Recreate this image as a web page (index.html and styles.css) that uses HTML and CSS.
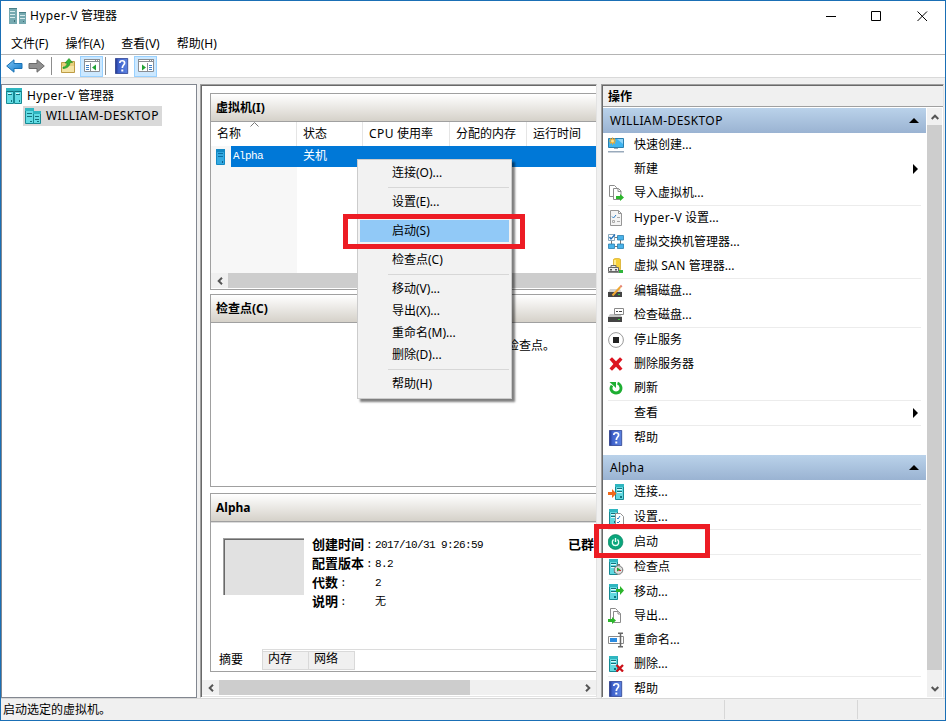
FILE: index.html
```html
<!DOCTYPE html>
<html lang="zh-CN">
<head>
  <meta charset="UTF-8" />
  <meta name="viewport" content="width=device-width, initial-scale=1" />
  <title>Hyper-V 管理器</title>
  <link rel="stylesheet" href="styles.css">
</head>
<body>
  <svg class="sprite" aria-hidden="true">
    <defs>
      <linearGradient id="gBlue" x1="0" y1="0" x2="1" y2="1"><stop offset="0" stop-color="#7fc4f5"/><stop offset="1" stop-color="#0f78c8"/></linearGradient>
      <linearGradient id="gHelp" x1="0" y1="0" x2="1" y2="0"><stop offset="0" stop-color="#22378c"/><stop offset=".25" stop-color="#3f62cc"/><stop offset="1" stop-color="#5b82e0"/></linearGradient>
    </defs>
    <symbol id="server" viewBox="0 0 16 16">
      <path fill="#62d8e0" stroke="#178a94" d="M1.5.5h8v15h-8z"/>
      <path fill="#2fb6c0" d="M1 0h9v3H1z"/>
      <path fill="none" stroke="#12727c" d="M3 4.500h5M3 7.500h5"/>
      <path fill="#d9fbfd" d="M3 5h5v1H3zM3 8h5v1H3z"/>
      <path fill="#12727c" d="M6 12h2v2H6z"/>
    </symbol>
    <symbol id="servers" viewBox="0 0 16 16">
      <path fill="#62dce4" stroke="#178a94" d="M.5.5h7v15h-7zM8.500.5h7v15h-7z"/>
      <path fill="#2fb6c0" d="M0 0h16v3H0z"/>
      <path fill="none" stroke="#12727c" d="M1 3.500h6M9 3.500h6M2 6.500h4M10 6.500h4"/>
      <path fill="#d9fbfd" d="M2 5h3v1H2zM10 5h3v1h-3z"/>
      <path fill="#12727c" d="M5 12h1v2H5zM13 12h1v2h-1z"/>
    </symbol>
    <symbol id="host" viewBox="0 0 16 16">
      <path fill="#62dce4" stroke="#178a94" d="M.5.5h8v15h-8zM8.500 4.500h7v11h-7z"/>
      <path fill="#2fb6c0" d="M0 0h9v3H0zM8 3h8v3H8z"/>
      <path fill="none" stroke="#12727c" d="M2 5.500h5M2 8.500h5M10 8.500h4M10 11.500h4"/>
      <path fill="#12727c" d="M5 13h2v1H5zM12 13h2v1h-2z"/>
    </symbol>
    <symbol id="app" viewBox="0 0 17 16">
      <path fill="#75a9b0" d="M0 0h8v16H0zM10 4h7v12h-7z"/>
      <path fill="#4a8088" d="M0 0h8v1H0zM10 4h7v1h-7z"/>
      <path stroke="#d5eaec" d="M1 3.500h5M1 6.500h5M1 9.500h5M11 7.500h5M11 10.500h5"/>
      <path fill="#3c6f77" d="M5 12h1v2H5zM14 13h1v1h-1z"/>
    </symbol>
    <symbol id="vm" viewBox="0 0 9 16">
      <path fill="#34a9e0" stroke="#1389c4" d="M.5.5h8v15h-8z"/>
      <path fill="#1389c4" d="M0 0h9v3H0z"/>
      <path stroke="#0c6ea3" d="M2 4.500h5M2 7.500h5"/>
      <path fill="#0c5d8a" d="M6 12h1v2H6z"/>
    </symbol>
    <symbol id="back" viewBox="0 0 17 14">
      <path fill="url(#gBlue)" stroke="#1a72b5" d="M.7 7 8 .8v3.700h8v5H8v3.700z"/>
    </symbol>
    <symbol id="forward" viewBox="0 0 17 14">
      <path fill="#919191" stroke="#6b6b6b" d="M16.300 7 9 .8v3.700H1v5h8v3.700z"/>
    </symbol>
    <symbol id="folder" viewBox="0 0 16 16">
      <path fill="#e8cf7c" stroke="#bd9b45" d="M1.500 4.500h6l1-1h6v11h-13z"/>
      <path fill="#f4e3a4" d="M2 8h12v6H2z"/>
      <path fill="#35b534" stroke="#1f8a22" stroke-width=".6" d="M3 9c3 0 4-2 4-4H5l4-4.500L12.500 4.500H10C10 8 7 10.500 3 10.500z"/>
    </symbol>
    <symbol id="paneLeft" viewBox="0 0 16 14">
      <path fill="#fff" stroke="#8a8e94" d="M.5.5h15v12h-15z"/>
      <path fill="#8a8e94" d="M0 0h16v4H0z"/><path stroke="#fff" d="M1 1.500h10M12 1.500h1M14 1.500h1M1 3.500h14"/>
      <path stroke="#8a8e94" d="M6.500 4v9"/><path stroke="#3e7fc6" d="M2 6.500h3M2 8.500h3M2 10.500h3"/>
      <path fill="#21a334" d="M12 5.500v6L8 8.500z"/>
    </symbol>
    <symbol id="paneRight" viewBox="0 0 16 14">
      <path fill="#fff" stroke="#8a8e94" d="M.5.5h15v12h-15z"/>
      <path fill="#8a8e94" d="M0 0h16v4H0z"/><path stroke="#fff" d="M1 1.500h10M12 1.500h1M14 1.500h1M1 3.500h14"/>
      <path stroke="#8a8e94" d="M9.500 4v9"/><path stroke="#3e7fc6" d="M11 6.500h3M11 8.500h3M11 10.500h3"/>
      <path fill="#21a334" d="M4 5.500v6l4-3z"/>
    </symbol>
    <symbol id="help" viewBox="0 0 16 16">
      <path fill="url(#gHelp)" stroke="#2a3c8c" stroke-width=".8" d="M1.500.4h12.200v15.200H1.500z"/>
      <path fill="none" stroke="#fff" stroke-width="1.700" d="M5.800 5c0-3 4.800-3 4.800 0 0 2-2.300 2.200-2.300 5"/>
      <path fill="#fff" d="M7.300 11.500h2v2h-2z"/>
    </symbol>
    <symbol id="quick" viewBox="0 0 16 16">
      <path fill="#3fb4f0" stroke="#2a7fae" d="M.5 1.500h15v9H.5z"/>
      <path fill="#8fd4f8" d="M9 2h6v5z"/>
      <path fill="#9ab" d="M6 11h4v1H6zM0 14h16v1.500H0z"/>
      <path stroke="#f5a623" stroke-width="1.100" d="M4.500.5v7M1 4h7M2 1.500l5 5M7 1.500l-5 5"/>
      <circle cx="4.500" cy="4" r="1.500" fill="#ffe08a"/>
    </symbol>
    <symbol id="import" viewBox="0 0 16 16">
      <path fill="#fff" stroke="#8b8b8b" d="M1.500.5h5l2 2v9h-7z"/>
      <path fill="#fff" stroke="#8b8b8b" d="M5.500 3.500h5l2.500 2.500v8.500H5.500zM10 3.500V6.500h3"/>
      <path fill="#2cb52c" d="M8 11h4V9l4 3.500-4 3.500v-2H8z"/>
    </symbol>
    <symbol id="export" viewBox="0 0 16 16">
      <path fill="#fff" stroke="#8b8b8b" d="M2.500.5h5l2 2v9h-7z"/>
      <path fill="#fff" stroke="#8b8b8b" d="M5.500 3.500h5l2 2v9h-7zM10 3.500V6h2.500"/>
      <path fill="#2cb52c" d="M0 11h4V9l4 3.500L4 16v-2H0z"/>
    </symbol>
    <symbol id="settings" viewBox="0 0 16 16">
      <path fill="#f4f4f4" stroke="#969696" d="M2.500.5h8l3 3v12h-11zM10.500.5v3h3"/>
      <path fill="none" stroke="#2b7cc4" d="M4 6.500 5.500 8 8 5"/>
      <path fill="none" stroke="#aaa" d="M9 7.500h3M4.500 10.500h2v2h-2zM9 11.500h3"/>
    </symbol>
    <symbol id="switch" viewBox="0 0 16 16">
      <path stroke="#777" d="M7 3.500h3M7 12.500h3M3.500 7v3M12.500 6v4" fill="none"/>
      <path fill="#fff" stroke="#8aa9bd" d="M.5.5h6v6h-6z"/>
      <path fill="#49b3ea" stroke="#2b7faf" stroke-width=".8" d="M9.500 1.500h6v4.500h-6zM.5 10h6v4.500h-6zM9.500 10h6v4.500h-6z"/>
      <path fill="none" stroke="#2471b8" stroke-width="1.300" d="M1.500 3 3 5l4-4.500"/>
    </symbol>
    <symbol id="san" viewBox="0 0 16 16">
      <path fill="#f7d038" stroke="#d1a51c" stroke-width=".7" d="M5.500 1.500c0-1.500 7-1.500 7 0v10h-7z"/>
      <path fill="#ffeb8f" d="M6 2h2v9H6z"/>
      <path fill="#ededed" stroke="#666" d="M.5 9.500h10v4H.5zM3 9V7.500h5V9"/>
      <path fill="#555" d="M2 11h2v1.500H2zM7 11h2v1.500H7z"/>
      <path fill="#888" d="M0 14h11v1H0z"/><path fill="#2fb53b" d="M11 12h4v3h-4z"/>
    </symbol>
    <symbol id="editDisk" viewBox="0 0 16 16">
      <path fill="#d2d2d2" d="M2 6h10l2 4H0z"/><path fill="#444" d="M0 9h14v5H0z"/>
      <path fill="#37c637" d="M10 11h2v1h-2z"/>
      <path stroke="#f0a830" stroke-width="2" d="M4.500 12.500 12.300 4"/>
      <path stroke="#e4806f" stroke-width="2" d="M12.300 4 13.700 2.500"/>
    </symbol>
    <symbol id="checkDisk" viewBox="0 0 16 16">
      <path fill="#c4c4c4" d="M2 7h10l2 3H0z"/><path fill="#444" d="M0 10h14v5H0z"/>
      <path fill="#37c637" d="M10 12h2v1h-2z"/>
      <path fill="#fff" stroke="#8a8a8a" d="M6.500 1.500h9v6h-9z"/>
      <path stroke="#444" d="M8 4.500h2M11 4.500h3"/>
    </symbol>
    <symbol id="stop" viewBox="0 0 16 16">
      <circle cx="8" cy="8" r="7.400" fill="#fff" stroke="#9a9a9a"/>
      <path fill="#222" d="M5 5h6v6H5z"/>
    </symbol>
    <symbol id="remove" viewBox="0 0 16 16">
      <path fill="#dc1420" d="M1.500 3.500 4 1.200l4 4 4-4 2.500 2.200L10.600 8l3.900 4.800-2.600 2L8 10.700l-4 4-2.500-2.200L5.400 8z"/>
    </symbol>
    <symbol id="refresh" viewBox="0 0 16 16">
      <path fill="none" stroke="#1eae32" stroke-width="2.800" d="M4 5.500C1.500 9 4 13 8 13s6.500-4 4-8c-.6-.9-1.500-1.500-2.500-1.800"/>
      <path fill="#1eae32" d="M1.500 2h6.500v6z"/>
    </symbol>
    <symbol id="connect" viewBox="0 0 16 16">
      <g transform="translate(6)"><use href="#server" width="16" height="16"/></g>
      <path fill="#f26a1b" d="M0 8h4V5l4.500 4.500L4 14v-3H0z"/>
    </symbol>
    <symbol id="vmSettings" viewBox="0 0 16 16">
      <use href="#server" width="16" height="16"/>
      <path fill="#fff" stroke="#929292" d="M7.500 4.500h5l3 3v8h-8z"/>
      <path fill="none" stroke="#2b7cc4" d="m9 9 1 1 2-3M9 13l1 1 2-2"/>
    </symbol>
    <symbol id="power" viewBox="0 0 16 16">
      <circle cx="7.500" cy="8" r="7.400" fill="#09a67c" stroke="#078260" stroke-width=".7"/>
      <path fill="none" stroke="#e9fff7" stroke-width="1.400" d="M5.500 5.500C3 8 4.500 11.500 7.500 11.500s4.500-3.500 2-6M7.500 4v4"/>
    </symbol>
    <symbol id="checkpoint" viewBox="0 0 16 16">
      <use href="#server" width="16" height="16"/>
      <circle cx="10.500" cy="11" r="4.300" fill="#ddd" stroke="#777"/>
      <path fill="#777" d="M9 5h3v1.500H9z"/><path fill="#22a52c" d="M9 8.500v4l3.500-2z"/><path stroke="#c33" d="M10.500 11.500h2.500"/>
    </symbol>
    <symbol id="move" viewBox="0 0 16 16">
      <use href="#server" width="16" height="16"/>
      <path fill="#2cb52c" d="M8 5h4V2l4 4.500-4 4.500V8H8z"/>
    </symbol>
    <symbol id="rename" viewBox="0 0 16 16">
      <path fill="#fff" stroke="#8a8a8a" d="M.5 4.500h15v7H.5z"/><path fill="#2a8be0" d="M2 6h7v4H2z"/>
      <path fill="none" stroke="#666" stroke-width="1.500" d="M10 1.200h5M10 14.800h5M12.500 1v14"/>
    </symbol>
    <symbol id="delete" viewBox="0 0 16 16">
      <use href="#server" width="16" height="16"/>
      <path stroke="#cc1018" stroke-width="2.300" d="m8.500 9 6.500 6.500M15 9l-6.500 6.500"/>
    </symbol>
    <symbol id="chevron" viewBox="0 0 8 8">
      <path fill="none" stroke="#555" stroke-width="2" d="M.7 6 4 2.700 7.300 6"/>
    </symbol>
  </svg>

  <div class="window">
    <header class="titlebar">
      <svg class="app-icon"><use href="#app"/></svg>
      <span class="title"><span class="latin">Hyper-V</span> 管理器</span>
      <div class="caption-buttons">
        <svg viewBox="0 0 11 11"><path d="M1 5.500h10"/></svg>
        <svg viewBox="0 0 11 11"><path d="M.5.5h9v9h-9z"/></svg>
        <svg viewBox="0 0 11 11"><path d="m.5.500 9.500 9.500M10 .5.5 10"/></svg>
      </div>
    </header>
    <nav class="menubar">
      <span>文件(F)</span><span>操作(A)</span><span>查看(V)</span><span>帮助(H)</span>
    </nav>
    <div class="toolbar">
      <svg class="arrow"><use href="#back"/></svg>
      <svg class="arrow"><use href="#forward"/></svg>
      <i class="bar"></i>
      <svg class="icon"><use href="#folder"/></svg>
      <span class="toggle"><svg class="pane-icon"><use href="#paneLeft"/></svg></span>
      <i class="bar second"></i>
      <svg class="icon"><use href="#help"/></svg>
      <span class="toggle"><svg class="pane-icon"><use href="#paneRight"/></svg></span>
    </div>

    <main>
      <section class="tree">
        <div class="node"><svg class="icon"><use href="#servers"/></svg><span class="label"><span class="latin">Hyper-V</span> 管理器</span></div>
        <div class="node child"><svg class="icon"><use href="#host"/></svg><span class="label latin">WILLIAM-DESKTOP</span></div>
      </section>

      <section class="center">
        <div class="panels">
          <div class="panel vms">
            <h2>虚拟机(I)</h2>
            <div class="columns">
              <span class="c-name">名称<svg class="sort" viewBox="0 0 9 5"><path d="M.5 4.500 4.500.5l4 4"/></svg></span><span class="c-state">状态</span><span class="c-cpu"><b class="latin">CPU</b> 使用率</span><span class="c-mem">分配的内存</span><span class="c-time">运行时间</span>
            </div>
            <div class="list">
              <div class="vm-row">
                <svg class="vm-icon"><use href="#vm"/></svg>
                <div class="selected"><span class="vm-name">Alpha</span><span class="vm-state">关机</span></div>
              </div>
            </div>
            <div class="hscroll">
              <span class="btn"><svg class="chev left"><use href="#chevron"/></svg></span>
              <span class="thumb"></span>
            </div>
          </div>

          <div class="panel checkpoints">
            <h2>检查点(C)</h2>
            <p>此虚拟机没有检查点。</p>
          </div>

          <div class="panel details">
            <h2>Alpha</h2>
            <div class="summary">
              <div class="preview"></div>
              <dl>
                <dt><b>创建时间</b>:</dt><dd>2017/10/31 9:26:59</dd>
                <dt><b>配置版本</b>:</dt><dd>8.2</dd>
                <dt><b>代数</b>:</dt><dd>2</dd>
                <dt><b>说明</b>:</dt><dd>无</dd>
              </dl>
              <b class="cluster">已群</b>
            </div>
            <div class="tabs"><span class="active">摘要</span><span>内存</span><span>网络</span></div>
          </div>
        </div>
        <div class="hscroll">
          <span class="btn"><svg class="chev left"><use href="#chevron"/></svg></span>
          <span class="thumb"></span>
          <span class="btn end"><svg class="chev right"><use href="#chevron"/></svg></span>
        </div>
      </section>

      <section class="actions">
        <h2>操作</h2>
        <div class="actions-body">
          <div class="action-list">
            <h3><span class="latin">WILLIAM-DESKTOP</span><i class="up"></i></h3>
            <ul>
              <li><svg class="icon"><use href="#quick"/></svg>快速创建...</li>
              <li><i class="icon"></i>新建<i class="more"></i></li>
              <li><svg class="icon"><use href="#import"/></svg>导入虚拟机...</li>
              <li class="line"><svg class="icon"><use href="#settings"/></svg><span class="latin">Hyper-V</span> 设置...</li>
              <li><svg class="icon"><use href="#switch"/></svg>虚拟交换机管理器...</li>
              <li><svg class="icon"><use href="#san"/></svg>虚拟 <span class="latin">SAN</span> 管理器...</li>
              <li class="line"><svg class="icon"><use href="#editDisk"/></svg>编辑磁盘...</li>
              <li><svg class="icon"><use href="#checkDisk"/></svg>检查磁盘...</li>
              <li class="line"><svg class="icon"><use href="#stop"/></svg>停止服务</li>
              <li><svg class="icon"><use href="#remove"/></svg>删除服务器</li>
              <li><svg class="icon"><use href="#refresh"/></svg>刷新</li>
              <li class="line"><i class="icon"></i>查看<i class="more"></i></li>
              <li class="line"><svg class="icon"><use href="#help"/></svg>帮助</li>
            </ul>
            <h3><span class="latin">Alpha</span><i class="up"></i></h3>
            <ul>
              <li><svg class="icon"><use href="#connect"/></svg>连接...</li>
              <li class="line"><svg class="icon"><use href="#vmSettings"/></svg>设置...</li>
              <li class="line"><svg class="icon"><use href="#power"/></svg>启动</li>
              <li class="line"><svg class="icon"><use href="#checkpoint"/></svg>检查点</li>
              <li class="line"><svg class="icon"><use href="#move"/></svg>移动...</li>
              <li><svg class="icon"><use href="#export"/></svg>导出...</li>
              <li><svg class="icon"><use href="#rename"/></svg>重命名...</li>
              <li><svg class="icon"><use href="#delete"/></svg>删除...</li>
              <li class="line"><svg class="icon"><use href="#help"/></svg>帮助</li>
            </ul>
          </div>
          <div class="vscroll">
            <span class="btn"><svg class="chev"><use href="#chevron"/></svg></span>
            <span class="thumb"></span>
            <span class="btn bottom"><svg class="chev down"><use href="#chevron"/></svg></span>
          </div>
        </div>
      </section>
    </main>

    <footer class="statusbar"><span class="status-text">启动选定的虚拟机。</span><span class="cell"></span><span class="cell"></span></footer>

    <div class="context-menu">
      <div>连接(O)...</div>
      <hr>
      <div>设置(E)...</div>
      <hr>
      <div class="hot">启动(S)</div>
      <hr>
      <div>检查点(C)</div>
      <hr>
      <div>移动(V)...</div>
      <div>导出(X)...</div>
      <div>重命名(M)...</div>
      <div>删除(D)...</div>
      <hr>
      <div>帮助(H)</div>
    </div>

    <div class="mark mark-menu"></div>
    <div class="mark mark-action"></div>
  </div>
</body>
</html>
```

FILE: styles.css
```css
:root {
  --frame: #1a6fb5;
  --face: #f0f0f0;
  --edge: #a0a0a0;
  --select: #0078d7;
  --mark: #ed1c24;
  --song: "Liberation Mono", "Noto Sans CJK SC", monospace;
}
* { box-sizing: border-box; }
body {
  margin: 0; overflow: hidden;
  font: 12px/16px "Noto Sans", "Noto Sans CJK SC", sans-serif;
  color: #000;
}
h2, h3, ul, dl, dd, p { margin: 0; padding: 0; }
svg { display: block; flex: none; }
.sprite { position: absolute; width: 0; height: 0; }
.icon { width: 16px; height: 16px; flex: none; }
.latin { letter-spacing: .4px; font-weight: normal; }

.window {
  position: relative; width: 946px; height: 721px;
  border: 1px solid var(--frame); background: var(--face);
  display: flex; flex-direction: column; overflow: hidden;
}

/* title, menu, toolbar */
.titlebar {
  height: 30px; background: #fff; flex: none;
  display: flex; align-items: center; padding: 0 17px 0 8px;
}
.app-icon { width: 17px; height: 16px; }
.title { margin-left: 4px; }
.caption-buttons { margin-left: auto; display: flex; gap: 35px; }
.caption-buttons svg { width: 11px; height: 11px; fill: none; stroke: #000; }
.menubar {
  height: 24px; background: #fff; border-bottom: 1px solid #b4b4b4; flex: none;
  display: flex; gap: 17px; padding: 5px 0 0 10px;
}
.toolbar {
  height: 23px; background: #fff; border-bottom: 1px solid #d9d9d9; flex: none;
  display: flex; align-items: center; padding-left: 5px;
}
.arrow { width: 17px; height: 14px; margin-right: 5px; }
.bar { width: 1px; height: 18px; background: #8d8d8d; margin: 0 8px 0 1px; }
.bar.second { margin-left: 2px; }
.toggle {
  width: 23px; height: 21px; margin-left: 4px;
  border: 1px solid #99d1ff; background: #cce8ff;
  display: flex; align-items: center; justify-content: center;
}
.pane-icon { width: 16px; height: 14px; }

main {
  flex: none; height: 614px; margin-top: 6px;
  display: flex;
}

/* console tree */
.tree {
  width: 196px; border: 1px solid #828790; background: #fff; padding-top: 1px;
}
.node { height: 20px; display: flex; align-items: center; padding-left: 4px; }
.node .label { padding-left: 5px; }
.node.child { margin-left: 21px; padding-left: 2px; background: #d9d9d9; width: 139px; }

/* middle pane */
.center {
  width: 397px; margin-left: 3px; background: #fff; overflow: hidden;
  border: 1px solid var(--edge); border-right-color: #e3e3e3; border-bottom-color: #fff;
  box-shadow: inset 1px 1px #696969, inset 0 -1px #e3e3e3;
  padding: 1px 0 0 1px;
  display: flex; flex-direction: column;
}
.panels { height: 594px; padding: 7px 0 0 8px; overflow: hidden; flex: none; }
.panel {
  width: 570px; border: 1px solid var(--edge); background: #fff;
  display: flex; flex-direction: column;
}
.panel h2 {
  height: 28px; flex: none; padding: 6px 5px; font-size: 12px; line-height: 16px;
  border-bottom: 1px solid var(--edge);
  background: linear-gradient(#fff, #d5d1c9);
}
.vms { height: 197px; }
.checkpoints { height: 193px; margin-top: 4px; }
.details { height: 179px; margin-top: 6px; }
.columns { height: 24px; flex: none; display: flex; }
.columns span {
  border-right: 1px solid #e5e5e5; padding: 4px 0 0 6px; white-space: nowrap;
  position: relative;
}
.c-name { width: 86px; }
.c-state { width: 66px; }
.c-cpu { width: 87px; }
.c-mem { width: 77px; }
.c-time { width: 90px; }
.sort {
  position: absolute; left: 39px; top: 0;
  width: 9px; height: 5px; fill: none; stroke: #777;
}
.list {
  flex: 1; background: linear-gradient(90deg, #f7f7f7 86px, #fff 86px);
}
.vm-row { height: 21px; display: flex; align-items: center; padding-left: 5px; }
.vm-icon { width: 9px; height: 16px; }
.selected {
  flex: 1; height: 21px; margin-left: 6px; padding: 2px;
  background: var(--select); color: #fff;
  font: 11px/17px var(--song); display: flex;
}
.vm-name { width: 70px; letter-spacing: -.6px; }
.vm-state { font-size: 12px; padding-top: 1px; }
.checkpoints p { text-align: center; padding-top: 16px; font-family: var(--song); }

.summary {
  height: 128px; flex: none; border-top: 1px solid #dcdcdc;
  border-bottom: 1px solid #dcdcdc;
  padding: 13px 0 0 12px; display: flex;
  font: 11px/19px var(--song);
}
.preview {
  width: 81px; height: 57px; margin: 2px 8px 0 0; background: #e1e1e1;
  border: solid var(--edge); border-width: 1px 0 0 1px;
  box-shadow: inset 1px 1px #696969;
}
.summary dl { display: grid; grid-template-columns: 63px 193px; align-content: start; }
.summary dt, .summary dd { height: 19px; letter-spacing: -.6px; white-space: nowrap; }
.summary dt { display: flex; }
.summary b { font-size: 13px; letter-spacing: 0; padding-right: 2px; line-height: 20px; }
.tabs { display: flex; font-family: var(--song); align-items: flex-start; }
.tabs span {
  width: 46px; height: 19px; margin-top: 1px; padding: 0 5px; background: var(--face);
  border: solid #d9d9d9; border-width: 1px 1px 1px 0;
}
.tabs .active {
  width: 52px; height: 21px; margin-top: -1px; padding: 4px 8px 0; background: #fff;
  border-width: 0 1px 0 0;
}

/* scrollbars */
.hscroll { height: 15px; flex: none; display: flex; background: var(--face); }
.hscroll .btn { width: 17px; display: flex; align-items: center; justify-content: center; }
.hscroll .thumb { width: 251px; background: #cdcdcd; }
.vms .hscroll .thumb { width: 480px; }
.vms .hscroll { margin-bottom: 1px; }
.hscroll .end { margin-left: auto; }
.chev { width: 8px; height: 8px; }
.chev.left { transform: rotate(-90deg); }
.chev.right { transform: rotate(90deg); }
.chev.down { transform: rotate(180deg); }
.vscroll { width: 15px; margin-left: 1px; background: var(--face); display: flex; flex-direction: column; }
.vscroll .btn { height: 17px; flex: none; display: flex; align-items: center; justify-content: center; }
.vscroll .bottom { margin-top: auto; }
.vscroll .thumb { height: 545px; background: #cdcdcd; }

/* actions pane */
.actions {
  width: 343px; margin-left: 4px; background: #fff;
  border: 1px solid var(--edge); border-right-color: #e3e3e3; border-bottom-color: #fff;
  box-shadow: inset 1px 1px #696969;
  padding: 1px 0 0 1px;
  display: flex; flex-direction: column; overflow: hidden;
}
.actions h2 {
  height: 21px; flex: none; padding: 3px 5px 0; font-size: 12px; line-height: 16px;
  background: var(--face); border-bottom: 1px solid var(--edge);
}
.actions-body { height: 589px; display: flex; margin-top: 1px; }
.action-list { width: 323px; overflow: hidden; }
.action-list h3 {
  height: 25px; padding: 0 7px; font-size: 12px; font-weight: normal;
  background: linear-gradient(#bad2ea, #9ab3d2);
  display: flex; align-items: center; justify-content: space-between;
}
.action-list ul { list-style: none; padding: 0 5px; }
.action-list ul + h3 { margin-top: 5px; }
.action-list li { height: 24px; display: flex; align-items: center; white-space: pre; }
.action-list li.line { height: 25px; border-top: 1px solid #ececec; }
.action-list li .icon { margin-right: 10px; }
.up { border: 5px solid transparent; border-top: 0; border-bottom-color: #000; }
.more { border: 5px solid transparent; border-right: 0; border-left-color: #000; margin: 0 3px 0 auto; }

.statusbar {
  flex: 1; border-top: 1px solid #d7d7d7; display: flex; padding-left: 2px;
}
.status-text { width: 721px; flex: none; padding-top: 3px; }
.cell { width: 133px; flex: none; height: 19px; margin-top: 1px; border-left: 1px solid #d7d7d7; }

/* floating above the window */
.context-menu {
  position: absolute; left: 356px; top: 158px; width: 155px; height: 240px;
  padding: 2px; background: #f2f2f2; border: 1px solid #ccc;
  box-shadow: 3px 3px 2px rgba(0,0,0,.5);
}
.context-menu div { height: 22px; padding: 3px 0 0 32px; }
.context-menu .hot { background: #91c9f7; }
.context-menu hr { height: 1px; margin: 3px 0 3px 28px; border: 0; background: #d7d7d7; }
.mark { position: absolute; border: 5px solid var(--mark); }
.mark-menu { left: 342px; top: 213px; width: 182px; height: 35px; }
.mark-action { left: 593px; top: 523px; width: 116px; height: 34px; }
```
